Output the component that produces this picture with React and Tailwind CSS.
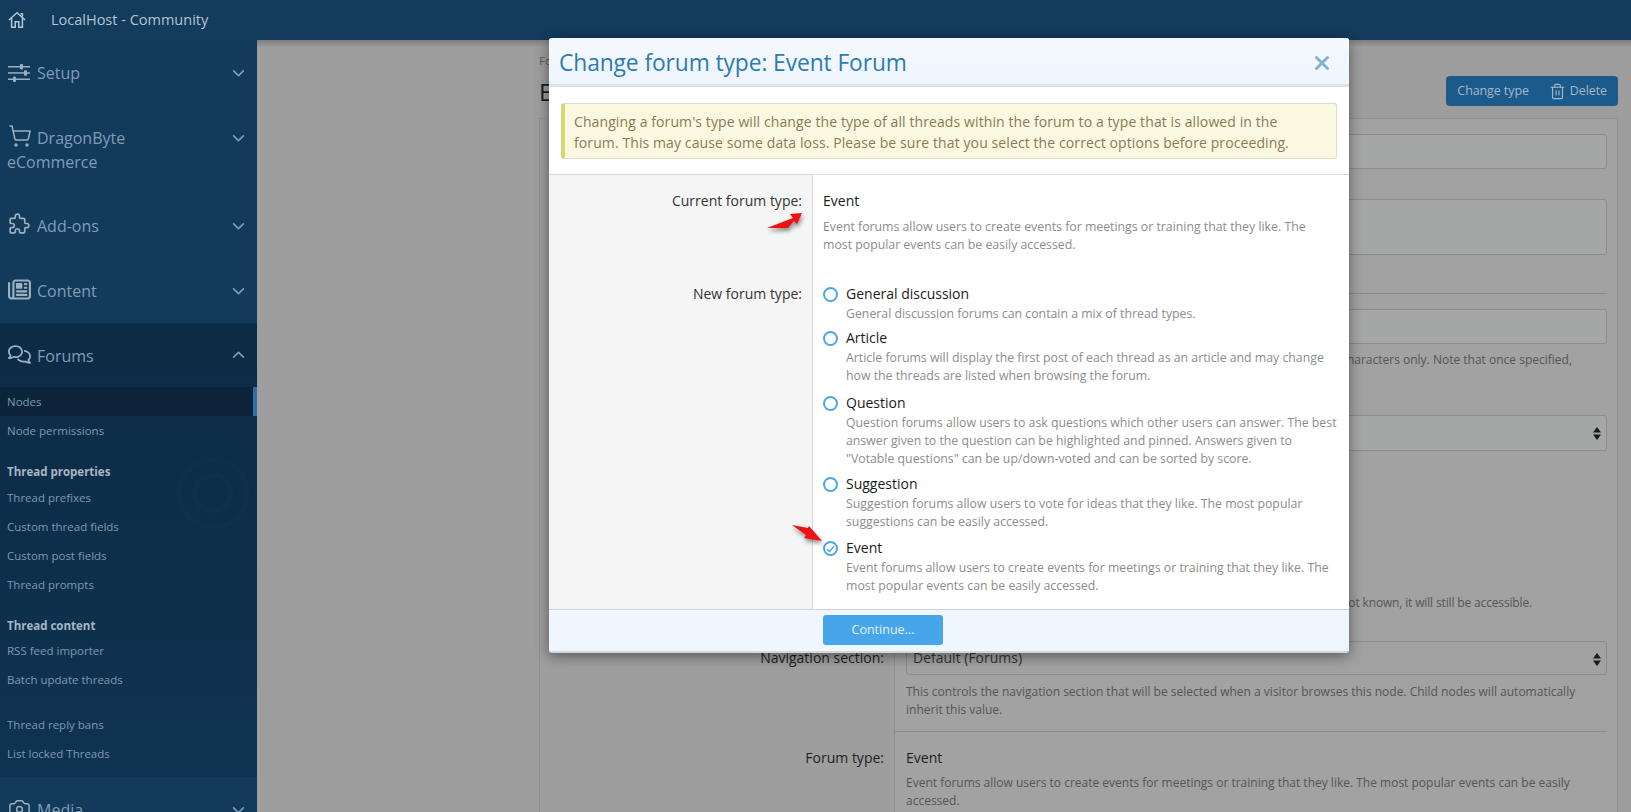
import { X } from "lucide-react";
import { FaChevronDown, FaChevronUp, FaRegComments, FaRegNewspaper } from "react-icons/fa6";
import { TbPuzzle } from "react-icons/tb";
import { Camera, ShoppingCart, Trash2 } from "lucide-react";

const font = "font-['Open_Sans',sans-serif]";

function SlidersIcon() {
  return (
    <svg width="22" height="20" viewBox="0 0 22 20" fill="currentColor">
      <rect x="0" y="3" width="22" height="1.5" />
      <rect x="12" y="1" width="3" height="5.5" rx="1" />
      <rect x="0" y="9.2" width="22" height="1.5" />
      <rect x="16" y="7.2" width="3" height="5.5" rx="1" />
      <rect x="0" y="15.5" width="22" height="1.5" />
      <rect x="5" y="13.5" width="3" height="5.5" rx="1" />
    </svg>
  );
}

function HomeIcon() {
  return (
    <svg width="18" height="18" viewBox="0 0 20 20" fill="none" stroke="currentColor" strokeWidth="1.7">
      <path d="M1 10 L10 2 L19 10 M4 8 V18 H8 V12 H12 V18 H16 V8 M14 3 H16 V6.5" />
    </svg>
  );
}

function NavHead({ icon, open, py = "py-[20.5px]", children }) {
  return (
    <div className={`relative px-[8px] ${py} text-[16px] leading-[24px] text-[#7f9db6]`}>
      <span className="inline-flex items-center w-[29px] h-[14px] align-[-4px] text-[#9cb0bf]">{icon}</span>
      {children}
      <span className="absolute right-[12px] top-[26px] text-[13px] text-[#7f9db6]">
        {open ? <FaChevronUp /> : <FaChevronDown />}
      </span>
    </div>
  );
}

function NavLink({ active, children }) {
  return (
    <div className={`px-[7px] h-[29px] leading-[29px] text-[11.5px] text-[#7d9ab0] ${active ? "bg-[#0b2439] border-r-[4px] border-[#2f6ea3]" : ""}`}>
      {children}
    </div>
  );
}

function NavGroup({ h = "h-[38px]", children }) {
  return <div className={`px-[7px] pt-[15px] ${h} leading-[24px] text-[11.5px] font-bold text-[#a6b7c3]`}>{children}</div>;
}

function Sidebar() {
  return (
    <aside className="w-[257px] shrink-0 bg-[#123a5b]">
      <NavHead icon={<SlidersIcon />}>Setup</NavHead>
      <NavHead py="pt-[20.5px] pb-[19.5px]" icon={<ShoppingCart size={24} strokeWidth={1.5} />}>DragonByte<br /><span className="-ml-[1px]">eCommerce</span></NavHead>
      <NavHead icon={<TbPuzzle size={25} strokeWidth={1.6} className="-ml-[1px]" />}>Add-ons</NavHead>
      <NavHead icon={<FaRegNewspaper size={23} />}>Content</NavHead>
      <div className="relative h-[454px] bg-gradient-to-b from-[#0c2b45] to-[#0e3352]">
        <NavHead py="pt-[20.5px] pb-[19.5px]" open icon={<FaRegComments size={23} />}>Forums</NavHead>
        <NavLink active>Nodes</NavLink>
        <NavLink>Node permissions</NavLink>
        <NavGroup>Thread properties</NavGroup>
        <NavLink>Thread prefixes</NavLink>
        <NavLink>Custom thread fields</NavLink>
        <NavLink>Custom post fields</NavLink>
        <NavLink>Thread prompts</NavLink>
        <NavGroup h="h-[37px]">Thread content</NavGroup>
        <NavLink>RSS feed importer</NavLink>
        <NavLink>Batch update threads</NavLink>
        <div className="h-[16px]" />
        <NavLink>Thread reply bans</NavLink>
        <NavLink>List locked Threads</NavLink>
        <svg width="76" height="76" viewBox="0 0 76 76" fill="none" stroke="#ffffff" strokeOpacity="0.012" strokeWidth="5" className="absolute left-[175px] top-[132px]">
          <circle cx="38" cy="38" r="34" />
          <circle cx="38" cy="38" r="18" />
        </svg>
      </div>
      <NavHead icon={<Camera size={23} strokeWidth={1.5} />}>Media</NavHead>
    </aside>
  );
}

function SelectArrows() {
  return (
    <svg width="8" height="13" viewBox="0 0 8 13" className="absolute right-[5px] top-[11px]" fill="#1c1c1c">
      <path d="M4 0 L8 5.5 H0 Z M0 7.5 H8 L4 13 Z" />
    </svg>
  );
}

function Background() {
  return (
    <main className="flex-1 min-w-0 bg-[#9d9d9d] pl-[282px] pr-[13px] relative">
      <div className="absolute inset-x-0 top-0 h-[7px] bg-gradient-to-b from-[#7d7d7d] to-transparent" />
      <div className="h-[38px] pt-[12px] text-[11.5px] text-[#5c5c5c] leading-[18px]">Forums</div>
      <div className="flex justify-between items-start -mt-[2px] h-[42px]">
        <h1 className="text-[24px] leading-[32px] text-[#1c1c1c]">Edit forum: Event Forum</h1>
        <div className="flex items-center h-[30px] rounded-[4px] bg-[#1c5a8b] px-[11px] text-[12.5px] text-[#a3b9ca] tracking-[-0.1px]">
          Change type
          <Trash2 size={17} strokeWidth={1.6} className="ml-[20px] mr-[4px]" />
          Delete
        </div>
      </div>
      <div className="h-[700px] bg-[#a2a2a2] border border-[#919191] grid grid-cols-[355px_1fr]">
        <div className="border-r border-[#8f8f8f] bg-[#9e9e9e] text-right pr-[10px] text-[14px] text-[#1f1f1f]">
          <div className="h-[523px]" />
          <div className="h-[32px] leading-[32px]">Navigation section:</div>
          <div className="h-[74px]" />
          <div className="h-[20px] leading-[20px]">Forum type:</div>
        </div>
        <div className="pl-[11px] pr-[10px] text-[12px] text-[#555555]">
          <div className="mt-[15px] h-[35px] rounded-[3px] border border-[#8c8c8c] bg-[#a5a6a6]" />
          <div className="mt-[30px] h-[56px] rounded-[3px] border border-[#8c8c8c] bg-[#a5a6a6]" />
          <div className="mt-[38px] -ml-[11px] border-t border-[#8a8a8a]" />
          <div className="mt-[15px] h-[35px] rounded-[3px] border border-[#8c8c8c] bg-[#a5a6a6]" />
          <p className="mt-[7px] w-[666px] text-right whitespace-nowrap leading-[18px]">You may use a-z, 0-9, -, and _ characters only. Note that once specified,</p>
          <div className="mt-[46px] h-[36px] relative rounded-[3px] border border-[#8c8c8c] bg-[#a5a6a6]"><SelectArrows /></div>
          <p className="mt-[143px] w-[626px] text-right whitespace-nowrap leading-[18px] tracking-[-0.15px]">Even if the URL is not known, it will still be accessible.</p>
          <div className="mt-[29px] h-[34px] relative rounded-[3px] border border-[#8c8c8c] pl-[6px] leading-[32px] text-[14px] text-[#333333]">Default (Forums)<SelectArrows /></div>
          <p className="mt-[8px] leading-[18px]">This controls the navigation section that will be selected when a visitor browses this node. Child nodes will automatically<br />inherit this value.</p>
          <div className="mt-[12px] -ml-[11px] border-t border-[#8a8a8a]" />
          <div className="mt-[16px] h-[20px] leading-[20px] text-[14px] text-[#1f1f1f]">Event</div>
          <p className="mt-[6px] leading-[18px]">Event forums allow users to create events for meetings or training that they like. The most popular events can be easily<br />accessed.</p>
        </div>
      </div>
    </main>
  );
}

function RadioRow({ checked, title, children, mb = "mb-[7px]" }) {
  return (
    <div className={`flex ${mb}`}>
      <span className="w-[15px] h-[15px] mt-[3px] mr-[8px] shrink-0 rounded-full border-2 border-[#4aa6e6] flex items-center justify-center">
        {checked && (
          <svg width="9" height="8" viewBox="0 0 9 8" fill="none" stroke="#4aa6e6" strokeWidth="1.5">
            <path d="M1 4.2 L3.4 6.4 L8 1.2" />
          </svg>
        )}
      </span>
      <div>
        <div className="h-[20px] leading-[20px] text-[14px] text-[#1a1a1a]">{title}</div>
        <div className="mt-[1px] text-[12.3px] leading-[18px] text-[#8c8c8c]">{children}</div>
      </div>
    </div>
  );
}

function RedArrow({ className, points }) {
  return (
    <svg width="44" height="30" viewBox="0 0 44 30" className={`absolute drop-shadow-[1px_3px_2px_rgba(0,0,0,0.45)] ${className}`}>
      <polygon points={points} fill="#ee1212" />
    </svg>
  );
}

function Modal() {
  return (
    <div className="absolute left-[549px] top-[38px] w-[800px] h-[615px] flex flex-col bg-white rounded-[3px] shadow-[0_3px_14px_rgba(0,0,0,0.45)] border-b-[2px] border-[#d4d8dc]">
      <div className="h-[49px] shrink-0 flex items-center justify-between pl-[10px] pr-[16px] pt-[3px] bg-gradient-to-b from-[#f5f9fe] to-[#eef5fd] border-b-[3px] border-[#dce3ea] rounded-t-[3px]">
        <h2 className="mt-[1px] text-[22.8px] text-[#2c7bb3] tracking-[-0.1px]">Change forum type: Event Forum</h2>
        <X size={22} strokeWidth={3.2} className="text-[#85b2d0]" />
      </div>
      <div className="mx-[12px] mt-[16px] h-[56px] shrink-0 rounded-[3px] border border-[#dddcc4] border-l-[4px] border-l-[#d5da6f] bg-[#fbf8e1] pl-[9px] py-[7px] text-[14px] leading-[21px] text-[#8a7b55] tracking-[0.1px]">
        Changing a forum's type will change the type of all threads within the forum to a type that is allowed in the<br />
        forum. This may cause some data loss. Please be sure that you select the correct options before proceeding.
      </div>
      <div className="mt-[15px] flex-1 grid grid-cols-[264px_1fr] border-t border-[#dcdcdc]">
        <div className="bg-[#f5f5f5] border-r border-[#dcdcdc] text-right pr-[10px] text-[14px] text-[#333333]">
          <div className="mt-[16px] h-[20px] leading-[20px]">Current forum type:</div>
          <div className="mt-[73px] h-[20px] leading-[20px]">New forum type:</div>
        </div>
        <div className="pl-[10px] pr-[8px]">
          <div className="mt-[16px] h-[20px] leading-[20px] text-[14px] text-[#1a1a1a]">Event</div>
          <div className="mt-[7px] mb-[30px] text-[12.3px] leading-[18px] text-[#8c8c8c]">
            Event forums allow users to create events for meetings or training that they like. The<br />most popular events can be easily accessed.
          </div>
          <RadioRow mb="mb-[5px]" title="General discussion">General discussion forums can contain a mix of thread types.</RadioRow>
          <RadioRow mb="mb-[8px]" title="Article">Article forums will display the first post of each thread as an article and may change<br />how the threads are listed when browsing the forum.</RadioRow>
          <RadioRow mb="mb-[6px]" title="Question">Question forums allow users to ask questions which other users can answer. The best<br />answer given to the question can be highlighted and pinned. Answers given to<br />"Votable questions" can be up/down-voted and can be sorted by score.</RadioRow>
          <RadioRow title="Suggestion">Suggestion forums allow users to vote for ideas that they like. The most popular<br />suggestions can be easily accessed.</RadioRow>
          <RadioRow checked title="Event">Event forums allow users to create events for meetings or training that they like. The<br />most popular events can be easily accessed.</RadioRow>
        </div>
      </div>
      <div className="h-[42px] shrink-0 border-t border-[#cfd3d6] bg-[#eff6fd] flex justify-start pl-[274px] pt-[5px] rounded-b-[3px]">
        <div className="w-[120px] h-[30px] rounded-[3px] bg-[#47a5e9] text-center leading-[30px] text-[12.5px] font-medium text-[#e6f3fc]">Continue...</div>
      </div>
      <RedArrow className="left-[217px] top-[174px]" points="1,16 27,6 24,2 36,1 31,12 28,9 22,16" />
      <RedArrow className="left-[242px] top-[486px]" points="1,1 17,4 18,2 31,17 13,14 15,11" />
    </div>
  );
}

export default function App() {
  return (
    <div className={`relative h-[812px] overflow-hidden flex flex-col ${font}`}>
      <header className="h-[40px] shrink-0 flex items-center bg-[#123b5c] pl-[8px] text-[14.5px] text-[#b4c5d1]">
        <HomeIcon />
        <span className="ml-[25px]">LocalHost - Community</span>
      </header>
      <div className="flex-1 flex min-h-0">
        <Sidebar />
        <Background />
      </div>
      <Modal />
    </div>
  );
}
